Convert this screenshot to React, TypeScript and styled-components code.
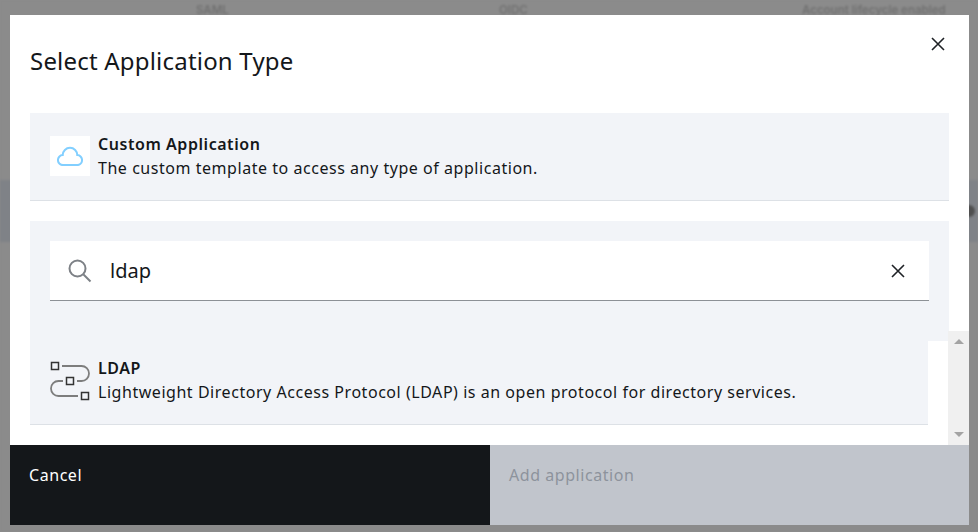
import React from "react";
import styled, { createGlobalStyle } from "styled-components";

const GlobalStyle = createGlobalStyle`
  html, body {
    margin: 0;
    height: 100%;
    overflow: hidden;
    background: #8b8b8b;
  }
  * {
    box-sizing: border-box;
  }
`;

const App: React.FC = () => {
  return (
    <>
      <GlobalStyle />
      <Backdrop>
        <BackRow>
          <BackCell>SAML</BackCell>
          <BackCell>OIDC</BackCell>
          <BackCell>Account lifecycle enabled</BackCell>
        </BackRow>
        <BackBand>
          <BackDot />
        </BackBand>
      </Backdrop>
      <Overlay>
        <Modal>
          <Header>
            <Title>Select Application Type</Title>
            <IconButton aria-label="Close">
              <CloseIcon />
            </IconButton>
          </Header>
          <Body>
            <Card $pad="19px 20px 20px" $margin="0 20px">
              <IconBox $white>
                <svg width="26" height="20" viewBox="2 0 28 22" fill="none" stroke="#82cfff" strokeWidth="2.2">
                  <path d="M8.5 21H23.5A5.5 5.5 0 0 0 24 10A8 8 0 0 0 8 10A5.5 5.5 0 0 0 8.5 21Z" />
                </svg>
              </IconBox>
              <CardText>
                <CardTitle>Custom Application</CardTitle>
                <CardDesc>The custom template to access any type of application.</CardDesc>
              </CardText>
            </Card>
            <SearchPanel>
              <SearchBox>
                <svg width="24" height="24" viewBox="0 0 24 24" fill="none" stroke="#7d8186" strokeWidth="2">
                  <circle cx="9.5" cy="9.5" r="8" />
                  <path d="M15.5 15.5L22.5 22.5" />
                </svg>
                <SearchInput defaultValue="ldap" />
                <ClearButton aria-label="Clear">
                  <CloseIcon />
                </ClearButton>
              </SearchBox>
            </SearchPanel>
            <ScrollArea>
              <ScrollContent>
                <PanelEnd />
                <Card $pad="15px 20px 20px" $margin="0 20px 0 20px">
                  <IconBox>
                    <LdapIcon />
                  </IconBox>
                  <CardText>
                    <CardTitle>LDAP</CardTitle>
                    <CardDesc>Lightweight Directory Access Protocol (LDAP) is an open protocol for directory services.</CardDesc>
                  </CardText>
                </Card>
              </ScrollContent>
              <Scrollbar>
                <ArrowUp />
                <ArrowDown />
              </Scrollbar>
            </ScrollArea>
          </Body>
          <Footer>
            <CancelButton>Cancel</CancelButton>
            <AddButton disabled>Add application</AddButton>
          </Footer>
        </Modal>
      </Overlay>
    </>
  );
};

const CloseIcon: React.FC = () => (
  <svg width="14" height="14" viewBox="0 0 14 14" fill="none" stroke="#1f2226" strokeWidth="1.6">
    <path d="M1 1L13 13M13 1L1 13" />
  </svg>
);

const LdapIcon: React.FC = () => (
  <svg width="40" height="42" viewBox="0 0 40 42" fill="none">
    <g stroke="#7d7d7d" strokeWidth="1.8">
      <path d="M12 6H31.5A7.5 7.5 0 0 1 31.5 21H27" />
      <path d="M13 21H8.5A7.5 7.5 0 0 0 8.5 36H28" />
    </g>
    <g stroke="#333" strokeWidth="1.5">
      <rect x="1.5" y="2.5" width="7" height="7" />
      <rect x="16.5" y="17.5" width="7" height="7" />
      <rect x="31.5" y="32.5" width="7" height="7" />
    </g>
  </svg>
);

const Backdrop = styled.div`
  height: 532px;
  background: #8b8b8b;
  filter: blur(1.2px);
  overflow: hidden;
  font-family: "Inter", sans-serif;
`;

const BackRow = styled.div`
  display: grid;
  grid-template-columns: repeat(3, 303px);
  padding-left: 196px;
  height: 180px;
`;

const BackCell = styled.div`
  font-size: 11.5px;
  font-weight: 600;
  color: #717171;
  line-height: 20px;
`;

const BackBand = styled.div`
  display: flex;
  justify-content: flex-end;
  align-items: center;
  height: 62px;
  background: #7f8287;
`;

const BackDot = styled.div`
  width: 12px;
  height: 12px;
  margin-right: 3px;
  border-radius: 50%;
  background: #4f4f4f;
`;

const Overlay = styled.div`
  position: fixed;
  inset: 0;
  padding: 15px 9px 7px 10px;
  font-family: "Noto Sans", sans-serif;
  color: #14171a;
`;

const Modal = styled.div`
  display: flex;
  flex-direction: column;
  height: 510px;
  background: #fff;
`;

const Header = styled.div`
  display: flex;
  justify-content: space-between;
  padding: 22px 24px 0 20px;
  height: 98px;
`;

const Title = styled.h2`
  margin: 8px 0 0;
  font-size: 24px;
  font-weight: 400;
  line-height: 32px;
  letter-spacing: 0.2px;
`;

const IconButton = styled.button`
  display: flex;
  padding: 0;
  border: 0;
  background: none;
  align-self: flex-start;
`;

const ClearButton = styled(IconButton)`
  align-self: center;
`;

const Body = styled.div`
  flex: 1;
  min-height: 0;
  display: flex;
  flex-direction: column;
`;

const Card = styled.div<{ $pad: string; $margin: string }>`
  display: flex;
  gap: 8px;
  padding: ${(p) => p.$pad};
  margin: ${(p) => p.$margin};
  background: #f2f4f8;
  border-bottom: 1px solid #dde1e6;
`;

const IconBox = styled.div<{ $white?: boolean }>`
  flex: none;
  display: flex;
  align-items: center;
  justify-content: center;
  width: 40px;
  height: ${(p) => (p.$white ? "40px" : "42px")};
  margin-top: 4px;
  background: ${(p) => (p.$white ? "#fff" : "transparent")};
`;

const CardText = styled.div`
  display: flex;
  flex-direction: column;
`;

const CardTitle = styled.div`
  font-size: 16px;
  font-weight: 600;
  line-height: 24px;
  letter-spacing: 0.55px;
`;

const CardDesc = styled.div`
  font-size: 16px;
  line-height: 24px;
  letter-spacing: 0.54px;
  white-space: nowrap;
`;

const SearchPanel = styled.div`
  margin: 20px 20px 0;
  padding: 20px 20px 30px;
  background: #f2f4f8;
`;

const SearchBox = styled.div`
  display: flex;
  align-items: center;
  gap: 18px;
  height: 60px;
  padding: 0 24px 0 18px;
  background: #fff;
  border-bottom: 1px solid #8d9196;
`;

const SearchInput = styled.input`
  flex: 1;
  min-width: 0;
  padding: 0;
  border: 0;
  outline: none;
  background: none;
  font-family: "Noto Sans", sans-serif;
  font-size: 20px;
  color: #14171a;
`;

const ScrollArea = styled.div`
  flex: 1;
  min-height: 0;
  display: flex;
`;

const ScrollContent = styled.div`
  flex: 1;
  min-width: 0;
`;

const PanelEnd = styled.div`
  height: 10px;
  margin-left: 20px;
  background: #f2f4f8;
`;

const Scrollbar = styled.div`
  flex: none;
  width: 21px;
  display: flex;
  flex-direction: column;
  justify-content: space-between;
  align-items: center;
  padding: 8px 0;
  background: #f0f0f0;
`;

const ArrowUp = styled.div`
  width: 0;
  height: 0;
  border-left: 5px solid transparent;
  border-right: 5px solid transparent;
  border-bottom: 5px solid #a3a3a3;
`;

const ArrowDown = styled(ArrowUp)`
  border-bottom: 0;
  border-top: 5px solid #a3a3a3;
`;

const Footer = styled.div`
  flex: none;
  display: grid;
  grid-template-columns: 480px 1fr;
  height: 80px;
`;

const FooterButton = styled.button`
  padding: 14px 19px 0;
  border: 0;
  text-align: left;
  align-items: flex-start;
  display: flex;
  font-family: "Noto Sans", sans-serif;
  font-size: 16px;
  line-height: 32px;
  letter-spacing: 0.55px;
`;

const CancelButton = styled(FooterButton)`
  background: #14171a;
  color: #fff;
`;

const AddButton = styled(FooterButton)`
  background: #c1c5cc;
  color: #8d939c;
`;

export default App;
